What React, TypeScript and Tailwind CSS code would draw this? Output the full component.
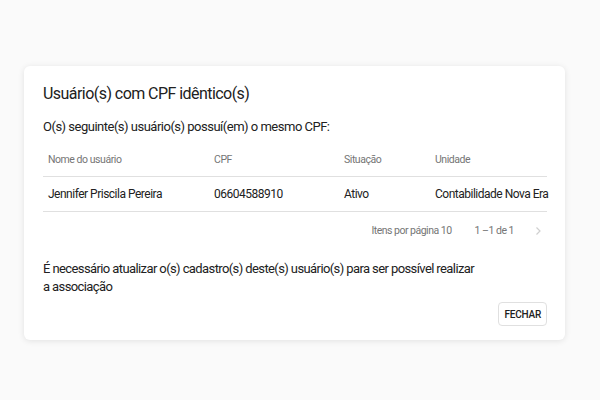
import React from "react";

export default function App() {
  return (
    <div className="w-[600px] h-[400px] bg-[#fafafa] pt-[66px] pl-[24px] font-['Roboto',sans-serif]">
      <div className="w-[541px] h-[274px] bg-white rounded-md shadow-[0_1px_6px_rgba(0,0,0,0.10)] pl-[19px] pr-[18px] flex flex-col">
        <h2 className="mt-[16px] text-[16px] leading-[24px] tracking-[-0.55px] text-[#212121]">Usuário(s) com CPF idêntico(s)</h2>
        <p className="mt-[11px] text-[13px] leading-[20px] tracking-[-0.5px] text-[#212121]">O(s) seguinte(s) usuário(s) possuí(em) o mesmo CPF:</p>
        <div className="mt-[6px] text-[#212121]">
          <div className="grid grid-cols-[166px_130px_91px_1fr] h-[34px] items-center pl-[5px] border-b border-[#e0e0e0] text-[10.5px] tracking-[-0.45px] text-[#757575]">
            <span>Nome do usuário</span>
            <span>CPF</span>
            <span>Situação</span>
            <span>Unidade</span>
          </div>
          <div className="grid grid-cols-[166px_130px_91px_1fr] h-[35px] items-center pl-[5px] border-b border-[#e0e0e0] text-[12px] tracking-[-0.5px]">
            <span>Jennifer Priscila Pereira</span>
            <span>06604588910</span>
            <span>Ativo</span>
            <span className="whitespace-nowrap">Contabilidade Nova Era</span>
          </div>
          <div className="flex items-center justify-end h-[38px] text-[10.5px] tracking-[-0.5px] text-[#757575]">
            <span>Itens por página 10</span>
            <span className="ml-[23px]">1 –1 de 1</span>
            <svg className="ml-[19px] mr-[4px]" width="10" height="10" viewBox="0 0 10 10" fill="none" stroke="#cfcfcf" strokeWidth="1.2">
              <path d="M3.5 1.5 L7 5 L3.5 8.5" />
            </svg>
          </div>
        </div>
        <p className="mt-[10px] text-[13px] leading-[18px] tracking-[-0.6px] text-[#212121]">
          É necessário atualizar o(s) cadastro(s) deste(s) usuário(s) para ser possível realizar
          <br />
          a associação
        </p>
        <div className="flex justify-end mt-[6px]">
          <button className="h-[24px] px-[5px] border border-[#e0e0e0] rounded text-[10px] font-medium tracking-[-0.2px] text-[#212121]">FECHAR</button>
        </div>
      </div>
    </div>
  );
}
